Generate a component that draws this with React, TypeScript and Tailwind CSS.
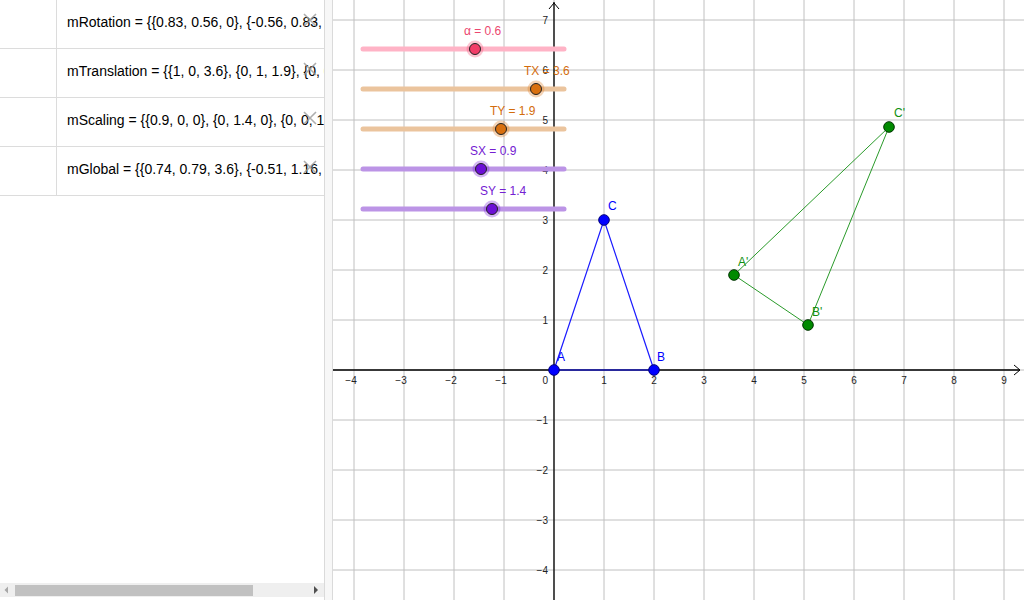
import React from "react";

const rows = [
  "mRotation = {{0.83, 0.56, 0}, {-0.56, 0.83, 0}, {0, 0, 1}}",
  "mTranslation = {{1, 0, 3.6}, {0, 1, 1.9}, {0, 0, 1}}",
  "mScaling = {{0.9, 0, 0}, {0, 1.4, 0}, {0, 0, 1}}",
  "mGlobal = {{0.74, 0.79, 3.6}, {-0.51, 1.16, 1.9}, {0, 0, 1}}",
];

const OX = 554;
const OY = 370;
const U = 50;
const px = (x: number) => OX + x * U;
const py = (y: number) => OY - y * U;

const sliders = [
  { label: "α = 0.6", lx: 464, ly: 35, y: 49, tx: 475, track: "#ffb3c6", thumb: "#f23d68", text: "#ec4870" },
  { label: "TX = 3.6", lx: 524, ly: 75, y: 89, tx: 536, track: "#ebc49d", thumb: "#d9700f", text: "#d36c0c" },
  { label: "TY = 1.9", lx: 490, ly: 115, y: 129, tx: 501, track: "#ebc49d", thumb: "#d9700f", text: "#d36c0c" },
  { label: "SX = 0.9", lx: 470, ly: 155, y: 169, tx: 481, track: "#bc94e6", thumb: "#6c0fd6", text: "#7420d2" },
  { label: "SY = 1.4", lx: 480, ly: 195, y: 209, tx: 492, track: "#bc94e6", thumb: "#6c0fd6", text: "#7420d2" },
];

function DeleteIcon() {
  return (
    <svg width="16" height="16" viewBox="0 0 16 16" className="absolute right-[6px] top-[12px]">
      <path d="M2 2 L14 14 M14 2 L2 14" stroke="#9a9a9a" strokeWidth="1.6" strokeOpacity="0.8" />
    </svg>
  );
}

function AlgebraPanel() {
  return (
    <div className="flex h-full w-[325px] flex-col border-r border-[#dadada] bg-white">
      {rows.map((r) => (
        <div key={r} className="flex h-[49px] border-b border-[#dcdcdc]">
          <div className="w-[57px] shrink-0 border-r border-[#dcdcdc]" />
          <div className="relative flex flex-1 items-center overflow-hidden pl-[10px] pb-[3px]">
            <span className="whitespace-nowrap text-[14px] text-black" style={{ fontFamily: '"Liberation Sans", Arial, sans-serif' }}>
              {r}
            </span>
            <DeleteIcon />
          </div>
        </div>
      ))}
      <div className="flex-1" />
      <div className="mb-[3px] flex h-[14px] items-center bg-[#efefef]">
        <svg width="15" height="14" viewBox="0 0 15 14" className="shrink-0">
          <path d="M8 3.5 L4.5 7 L8 10.5 Z" fill="#a8a8a8" />
        </svg>
        <div className="h-[11px] w-[238px] bg-[#c1c1c1]" />
        <div className="flex-1" />
        <svg width="14" height="14" viewBox="0 0 14 14" className="mr-[1px] shrink-0">
          <path d="M5 3 L9 7 L5 11 Z" fill="#505050" />
        </svg>
      </div>
    </div>
  );
}

function Graphics() {
  const vLines: number[] = [];
  for (let x = 354; x <= 1004; x += 50) vLines.push(x);
  const hLines: number[] = [];
  for (let y = 20; y <= 570; y += 50) hLines.push(y);
  const font = '"Liberation Sans", Arial, sans-serif';

  const A = [px(0), py(0)];
  const B = [px(2), py(0)];
  const C = [px(1), py(3)];
  const A2 = [734, 275];
  const B2 = [808, 325];
  const C2 = [889, 127];

  return (
    <div className="relative h-full flex-1 overflow-hidden bg-white">
      <svg className="block h-full w-full" viewBox="333 0 691 600" style={{ fontFamily: font }}>
        {vLines.map((x) => (
          <line key={"v" + x} x1={x} y1={0} x2={x} y2={600} stroke="#c0c0c0" strokeWidth="1" />
        ))}
        {hLines.map((y) => (
          <line key={"h" + y} x1={333} y1={y} x2={1024} y2={y} stroke="#c0c0c0" strokeWidth="1" />
        ))}

        {/* axes */}
        <line x1={333} y1={OY} x2={1020} y2={OY} stroke="#000" strokeWidth="1.3" />
        <path d="M1014 365 L1020 370 L1014 375" fill="none" stroke="#000" strokeWidth="1" />
        <line x1={OX} y1={2} x2={OX} y2={600} stroke="#000" strokeWidth="1.3" />
        <path d="M549 9 L554 3 L559 9" fill="none" stroke="#000" strokeWidth="1" />

        {/* x labels */}
        {[-4, -3, -2, -1, 1, 2, 3, 4, 5, 6, 7, 8, 9].map((n) => (
          <text key={"xl" + n} x={px(n) + (n < 0 ? -3 : 0)} y={384} fontSize="10" textAnchor="middle" fill="#222">
            {n < 0 ? "−" + -n : n}
          </text>
        ))}
        <text x={548} y={384} fontSize="10" textAnchor="end" fill="#222">0</text>
        {/* y labels */}
        {[7, 6, 5, 4, 3, 2, 1, -1, -2, -3, -4].map((n) => (
          <text key={"yl" + n} x={548} y={py(n) + 4} fontSize="10" textAnchor="end" fill="#222">
            {n < 0 ? "−" + -n : n}
          </text>
        ))}

        {/* sliders */}
        {sliders.map((s) => (
          <g key={s.label}>
            <line x1={363} y1={s.y} x2={564} y2={s.y} stroke={s.track} strokeWidth="5" strokeLinecap="round" />
            <circle cx={s.tx} cy={s.y} r={8.5} fill={s.thumb} fillOpacity="0.3" />
            <circle cx={s.tx} cy={s.y} r={5.5} fill={s.thumb} stroke="#222" strokeWidth="1" />
            <text x={s.lx} y={s.ly} fontSize="12" fill={s.text}>{s.label}</text>
          </g>
        ))}

        {/* triangle ABC */}
        <polygon points={`${A.join(",")} ${B.join(",")} ${C.join(",")}`} fill="none" stroke="#1a1aff" strokeWidth="1.2" />
        {[A, B, C].map((p, i) => (
          <circle key={"p" + i} cx={p[0]} cy={p[1]} r={5.3} fill="#0000ff" stroke="#00007a" strokeWidth="1" />
        ))}
        <text x={557} y={361} fontSize="12" fill="#0000ff">A</text>
        <text x={657} y={361} fontSize="12" fill="#0000ff">B</text>
        <text x={608} y={210} fontSize="12" fill="#0000ff">C</text>

        {/* triangle A'B'C' */}
        <polygon points={`${A2.join(",")} ${B2.join(",")} ${C2.join(",")}`} fill="none" stroke="#2a9a2a" strokeWidth="1" />
        {[A2, B2, C2].map((p, i) => (
          <circle key={"q" + i} cx={p[0]} cy={p[1]} r={5.3} fill="#008a00" stroke="#003300" strokeWidth="1" />
        ))}
        <text x={738} y={266} fontSize="12" fill="#109010">A'</text>
        <text x={812} y={316} fontSize="12" fill="#109010">B'</text>
        <text x={894} y={117} fontSize="12" fill="#109010">C'</text>
      </svg>
    </div>
  );
}

export default function App() {
  return (
    <div className="flex h-[600px] w-[1024px] overflow-hidden bg-white">
      <AlgebraPanel />
      <div className="h-full w-[8px] shrink-0 border-r border-[#dadada] bg-[#f7f7f7]" />
      <Graphics />
    </div>
  );
}
